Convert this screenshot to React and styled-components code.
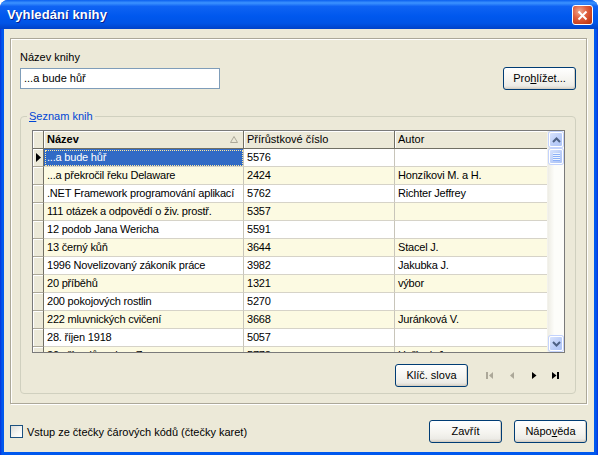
import React from 'react';
import styled, { createGlobalStyle } from 'styled-components';

const GlobalStyle = createGlobalStyle`
  html, body { margin: 0; padding: 0; background: #fff; }
  body {
    font-family: "Liberation Sans", Arial, sans-serif;
    font-size: 11px;
    color: #000;
  }
  * { box-sizing: border-box; }
`;

const books = [
  ['...a bude hůř', '5576', ''],
  ['...a překročil řeku Delaware', '2424', 'Honzíkovi M. a H.'],
  ['.NET Framework programování aplikací', '5762', 'Richter Jeffrey'],
  ['111 otázek a odpovědí o živ. prostř.', '5357', ''],
  ['12 podob Jana Wericha', '5591', ''],
  ['13 černý kůň', '3644', 'Stacel J.'],
  ['1996  Novelizovaný zákoník práce', '3982', 'Jakubka J.'],
  ['20 příběhů', '1321', 'výbor'],
  ['200 pokojových rostlin', '5270', ''],
  ['222 mluvnických cvičení', '3668', 'Juránková V.'],
  ['28. říjen 1918', '5057', ''],
  ['30 případů majora Zemana', '5773', 'Hořínek J.'],
];

const Window = styled.div`
  width: 598px;
  height: 455px;
  display: flex;
  flex-direction: column;
  background: linear-gradient(to right, #0831D9, #0058EE 2px, #0058EE calc(100% - 2px), #0831D9);
  border-radius: 8px 8px 0 0;
  overflow: hidden;
`;

const TitleBar = styled.div`
  height: 29px;
  flex: none;
  display: flex;
  align-items: center;
  justify-content: space-between;
  padding: 0 5px 0 7px;
  background: linear-gradient(
    to bottom,
    #0A5FEF 0%,
    #3C93FF 10%,
    #0F63F3 22%,
    #0058EE 55%,
    #0054E6 80%,
    #0042C8 100%
  );
`;

const Title = styled.span`
  font-family: "Liberation Sans", Arial, sans-serif;
  font-weight: bold;
  font-size: 13px;
  color: #fff;
  text-shadow: 1px 1px 0 #0A1E8C;
  letter-spacing: 0.1px;
`;

const CloseButton = styled.div`
  width: 21px;
  height: 20px;
  margin-top: 1px;
  border: 1px solid #fff;
  border-radius: 3px;
  background: radial-gradient(circle at 35% 30%, #F0A88E 0%, #E06040 40%, #C8401C 75%, #B2330E 100%);
  display: flex;
  align-items: center;
  justify-content: center;
`;

const Body = styled.div`
  flex: 1;
  margin: 0 4px 3px 4px;
  background: #ECE9D8;
  padding: 9px 7px 0 6px;
  display: flex;
  flex-direction: column;
`;

const Panel = styled.div`
  border: 1px solid #ACA899;
  box-shadow: inset 1px 1px 0 #fff, 1px 1px 0 #fff;
  padding: 11px 10px 9px 9px;
  display: flex;
  flex-direction: column;
`;

const FieldLabel = styled.div`
  line-height: 14px;
  margin-bottom: 3px;
`;

const InputRow = styled.div`
  height: 23px;
  display: flex;
  align-items: center;
  justify-content: space-between;
`;

const TextInput = styled.div`
  width: 200px;
  height: 21px;
  border: 1px solid #7F9DB9;
  background: #fff;
  padding: 0 3px;
  line-height: 19px;
`;

const Button = styled.div`
  width: 73px;
  height: 23px;
  border: 1px solid #003C74;
  border-radius: 3px;
  background: linear-gradient(to bottom, #FFFFFF 0%, #F4F3EE 60%, #ECEBE6 85%, #D6D0C5 100%);
  box-shadow: inset -1px -1px 0 #D6D0C5;
  display: flex;
  align-items: center;
  justify-content: center;
  padding-bottom: 1px;
  u { text-decoration: underline; }
`;

const Group = styled.fieldset`
  margin: 20px 0 0 0;
  min-width: 0;
  border: 1px solid #D0D0BF;
  border-radius: 4px;
  padding: 7px 10px 6px 11px;
`;

const Legend = styled.legend`
  padding: 0 2px;
  margin-left: -5px;
  line-height: 13px;
  color: #0046D5;
`;

const Grid = styled.div`
  height: 223px;
  display: flex;
  border: 1px solid #7A7A7A;
  background: #fff;
`;

const TableArea = styled.div`
  width: 515px;
  display: flex;
  flex-direction: column;
  overflow: hidden;
`;

const Row = styled.div`
  display: flex;
  flex: none;
  height: 18px;
`;

const HeaderCell = styled.div`
  width: ${(p) => p.$w}px;
  flex: none;
  height: 18px;
  background: #ECE9D8;
  border-right: 1px solid #716F64;
  border-bottom: 1px solid #716F64;
  box-shadow: inset 1px 1px 0 #fff;
  padding: 0 5px 0 3px;
  line-height: 17px;
  font-weight: ${(p) => (p.$bold ? 'bold' : 'normal')};
  display: flex;
  align-items: center;
  justify-content: space-between;
  white-space: nowrap;
  overflow: hidden;
`;

const RowHeader = styled.div`
  width: 11px;
  flex: none;
  background: #ECE9D8;
  border-right: 1px solid #716F64;
  border-bottom: 1px solid #ACA899;
  box-shadow: inset 1px 1px 0 #fff;
  display: flex;
  align-items: center;
  justify-content: center;
`;

const Cell = styled.div`
  width: ${(p) => p.$w}px;
  flex: none;
  padding: 0 3px;
  line-height: 17px;
  letter-spacing: -0.2px;
  white-space: nowrap;
  overflow: hidden;
  border-right: 1px solid #C8C5BA;
  border-bottom: 1px solid #D6D3C8;
  background: ${(p) => (p.$selected ? '#316AC5' : p.$alt ? '#FCFAE2' : '#fff')};
  color: ${(p) => (p.$selected ? '#fff' : '#000')};
  outline: ${(p) => (p.$selected ? '1px dotted #FFE9A0' : 'none')};
  outline-offset: -2px;
`;

const ScrollBar = styled.div`
  width: 17px;
  flex: none;
  display: flex;
  flex-direction: column;
  padding: 1px;
  background: linear-gradient(to right, #EEEDE5, #FDFDFA 40%, #FDFDFA);
  border-left: 1px solid #F3F2EC;
`;

const ScrollButton = styled.div`
  height: 15px;
  flex: none;
  border: 1px solid #fff;
  border-radius: 2px;
  background: linear-gradient(to bottom right, #D8E3FD, #B9CCF8 60%, #AEC4F6);
  box-shadow: 0 0 0 1px #C3D3FD;
  display: flex;
  align-items: center;
  justify-content: center;
`;

const Thumb = styled(ScrollButton)`
  margin-top: 2px;
  height: 15px;
`;

const Track = styled.div`
  flex: 1;
`;

const FooterRow = styled.div`
  margin-top: 11px;
  display: flex;
  align-items: center;
  justify-content: flex-end;
  gap: 10px;
`;

const Nav = styled.div`
  display: flex;
  margin-right: -1px;
`;

const NavSlot = styled.div`
  width: 22px;
  height: 16px;
  display: flex;
  align-items: center;
  justify-content: center;
`;

const BottomRow = styled.div`
  margin-top: 16px;
  display: flex;
  align-items: center;
  justify-content: space-between;
`;

const CheckLabel = styled.label`
  display: flex;
  align-items: center;
  gap: 4px;
`;

const CheckBox = styled.span`
  width: 13px;
  height: 13px;
  border: 1px solid #1C5180;
  background: linear-gradient(to bottom right, #DCDCD7, #F6F6F3 60%, #FFFFFF);
`;

const Buttons = styled.div`
  display: flex;
  gap: 12px;
`;

const SortArrow = () => (
  <svg width="8" height="7" viewBox="0 0 8 7">
    <path d="M4 0.5 L7.5 6.5 L0.5 6.5 Z" fill="none" stroke="#ACA899" strokeWidth="1" />
  </svg>
);

const Chevron = ({ down }) => (
  <svg width="9" height="6" viewBox="0 0 9 6">
    <path
      d={down ? 'M1 1 L4.5 4.5 L8 1' : 'M1 5 L4.5 1.5 L8 5'}
      fill="none"
      stroke="#4D6185"
      strokeWidth="2"
    />
  </svg>
);

const Grip = () => (
  <svg width="7" height="8" viewBox="0 0 7 8">
    {[0, 2, 4, 6].map((y) => (
      <line key={y} x1="0" x2="7" y1={y + 0.5} y2={y + 0.5} stroke="#EEF4FE" />
    ))}
    {[1, 3, 5, 7].map((y) => (
      <line key={y} x1="0" x2="7" y1={y + 0.5} y2={y + 0.5} stroke="#8CB0F8" />
    ))}
  </svg>
);

const NavIcon = ({ kind, active }) => {
  const c = active ? '#000' : '#ACA899';
  const shapes = {
    first: (
      <>
        <rect x="1" y="1" width="2" height="7" fill={c} />
        <path d="M8 1 L4 4.5 L8 8 Z" fill={c} />
      </>
    ),
    prev: <path d="M7 1 L3 4.5 L7 8 Z" fill={c} />,
    next: <path d="M3 1 L7.5 4.5 L3 8 Z" fill={c} />,
    last: (
      <>
        <path d="M1 1 L5.5 4.5 L1 8 Z" fill={c} />
        <rect x="6" y="1" width="2" height="7" fill={c} />
      </>
    ),
  };
  return (
    <svg width="9" height="9" viewBox="0 0 9 9">
      {shapes[kind]}
    </svg>
  );
};

const cols = [200, 151, 153];

export default function App() {
  return (
    <>
      <GlobalStyle />
      <Window>
        <TitleBar>
          <Title>Vyhledání knihy</Title>
          <CloseButton>
            <svg width="11" height="11" viewBox="0 0 11 11">
              <path d="M1.5 1.5 L9.5 9.5 M9.5 1.5 L1.5 9.5" stroke="#fff" strokeWidth="2" />
            </svg>
          </CloseButton>
        </TitleBar>
        <Body>
          <Panel>
            <FieldLabel>Název knihy</FieldLabel>
            <InputRow>
              <TextInput>...a bude hůř</TextInput>
              <Button>
                <span>
                  Pro<u>h</u>lížet...
                </span>
              </Button>
            </InputRow>
            <Group>
              <Legend>
                <u>S</u>eznam knih
              </Legend>
              <Grid>
                <TableArea>
                  <Row>
                    <HeaderCell $w={11} />
                    <HeaderCell $w={cols[0]} $bold>
                      <span>Název</span>
                      <SortArrow />
                    </HeaderCell>
                    <HeaderCell $w={cols[1]}>Přírůstkové číslo</HeaderCell>
                    <HeaderCell $w={cols[2]}>Autor</HeaderCell>
                  </Row>
                  {books.map((b, i) => (
                    <Row key={i}>
                      <RowHeader>
                        {i === 0 && (
                          <svg width="5" height="9" viewBox="0 0 5 9">
                            <path d="M0 0 L5 4.5 L0 9 Z" fill="#000" />
                          </svg>
                        )}
                      </RowHeader>
                      {b.map((v, j) => (
                        <Cell
                          key={j}
                          $w={cols[j]}
                          $alt={i % 2 === 1}
                          $selected={i === 0 && j === 0}
                        >
                          {v}
                        </Cell>
                      ))}
                    </Row>
                  ))}
                </TableArea>
                <ScrollBar>
                  <ScrollButton>
                    <Chevron />
                  </ScrollButton>
                  <Thumb>
                    <Grip />
                  </Thumb>
                  <Track />
                  <ScrollButton>
                    <Chevron down />
                  </ScrollButton>
                </ScrollBar>
              </Grid>
              <FooterRow>
                <Button>Klíč. slova</Button>
                <Nav>
                  <NavSlot>
                    <NavIcon kind="first" />
                  </NavSlot>
                  <NavSlot>
                    <NavIcon kind="prev" />
                  </NavSlot>
                  <NavSlot>
                    <NavIcon kind="next" active />
                  </NavSlot>
                  <NavSlot>
                    <NavIcon kind="last" active />
                  </NavSlot>
                </Nav>
              </FooterRow>
            </Group>
          </Panel>
          <BottomRow>
            <CheckLabel>
              <CheckBox />
              <span>Vstup ze čtečky čárových kódů (čtečky karet)</span>
            </CheckLabel>
            <Buttons>
              <Button>Zavřít</Button>
              <Button>
                <span>
                  Nápo<u>v</u>ěda
                </span>
              </Button>
            </Buttons>
          </BottomRow>
        </Body>
      </Window>
    </>
  );
}
